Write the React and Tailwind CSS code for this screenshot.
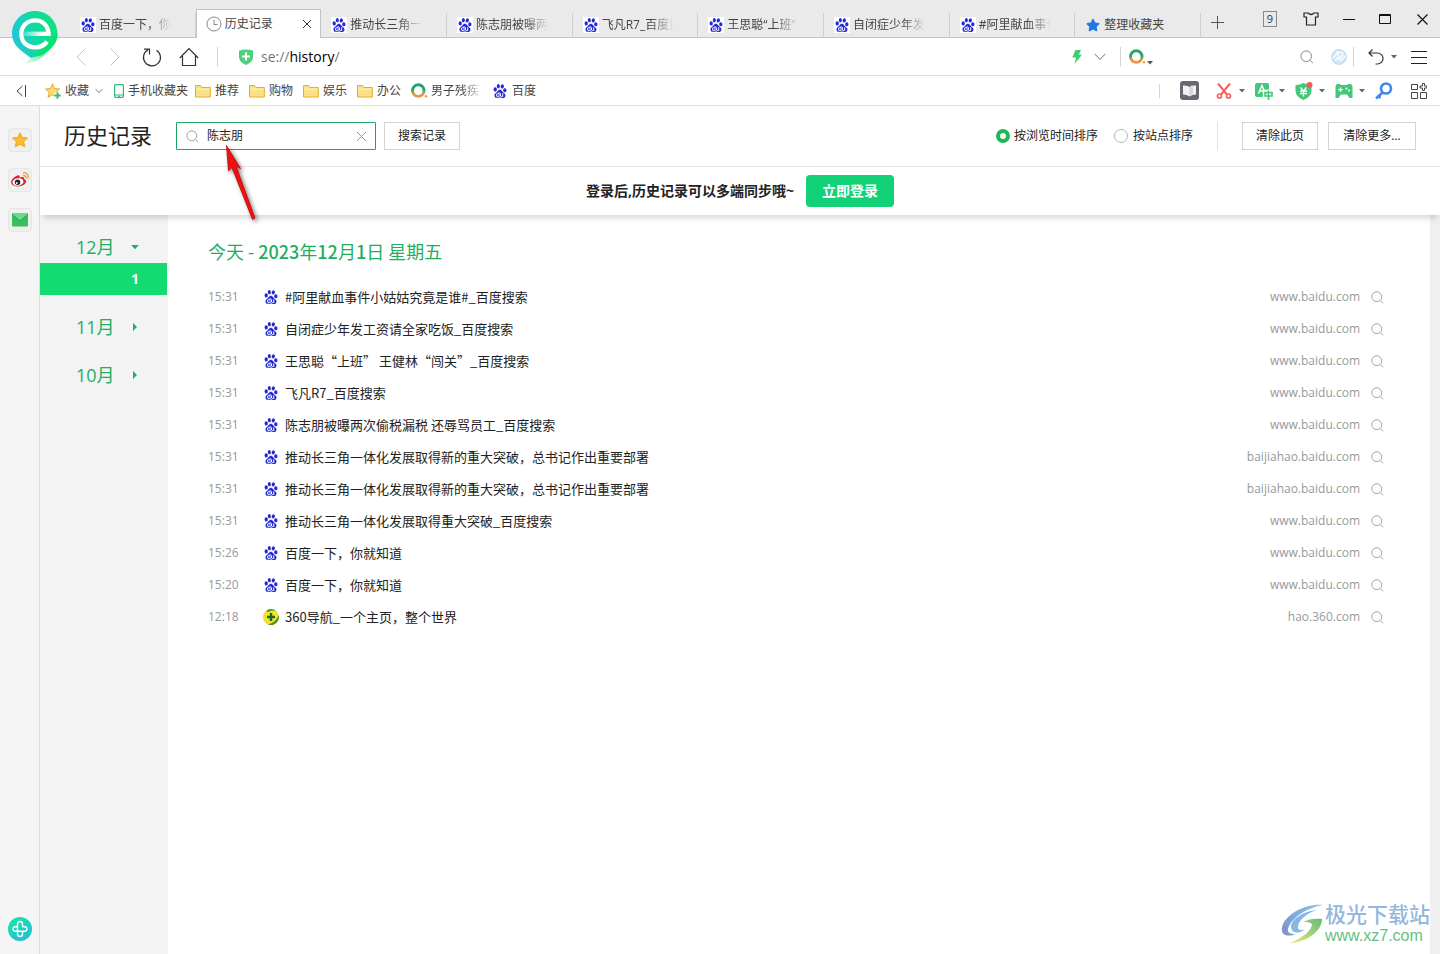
import React from "react";
import { SiBaidu } from "react-icons/si";
import { FaStar } from "react-icons/fa";

function Baidu() {
  return <SiBaidu aria-hidden="true" className="size-[14px] shrink-0 text-[#2529d8]" />;
}

function SearchIcon({ className }) {
  return (
    <svg viewBox="0 0 14 14" className={className} fill="none" stroke="currentColor" aria-hidden="true">
      <circle cx="6.2" cy="6.2" r="5.3" />
      <path d="M10.2 10.4 13 13.2" />
    </svg>
  );
}

function Caret({ className = "h-1 w-1.5" }) {
  return (
    <svg viewBox="0 0 6 4" className={"shrink-0 " + className} aria-hidden="true">
      <path d="M0 0H6L3 3.4Z" fill="currentColor" />
    </svg>
  );
}

function Chevron({ className }) {
  return (
    <svg viewBox="0 0 12 8" className={className} fill="none" stroke="currentColor" aria-hidden="true">
      <path d="M.8 1 6 6.4 11.2 1" />
    </svg>
  );
}

function Folder() {
  return (
    <svg viewBox="0 0 16 14" className="h-3.5 w-4 shrink-0" aria-hidden="true">
      <path d="M.5 13V1.5H5.5L7 3.5H15.3V13Z" fill="#fbe08a" stroke="#dfb02f" />
      <path d="M1 5.2H15" stroke="#fff1b8" />
    </svg>
  );
}

function RingLogo() {
  return (
    <svg viewBox="0 0 17 16" className="h-4 w-[17px] shrink-0" aria-hidden="true">
      <defs>
        <linearGradient id="ring" x1="0" y1="0" x2="0" y2="1">
          <stop offset=".45" stopColor="#21a66b" />
          <stop offset=".7" stopColor="#b8a44c" />
          <stop offset=".85" stopColor="#f7923c" />
        </linearGradient>
      </defs>
      <circle cx="7.3" cy="7.6" r="5.8" fill="none" stroke="url(#ring)" strokeWidth="2.9" />
      <circle cx="15" cy="13.2" r="1.2" fill="#f7923c" />
    </svg>
  );
}

function BrowserLogo() {
  return (
    <svg viewBox="0 0 46 54" className="h-[54px] w-[46px]" aria-hidden="true">
      <defs>
        <linearGradient id="pin" x1="0" y1=".7" x2="1" y2=".5">
          <stop offset="0" stopColor="#22c5dc" />
          <stop offset=".5" stopColor="#12d9a4" />
          <stop offset="1" stopColor="#0fe07e" />
        </linearGradient>
        <linearGradient id="tail" x1="1" y1="0" x2="0" y2="1">
          <stop offset=".3" stopColor="#07e368" />
          <stop offset="1" stopColor="#0fe070" stopOpacity="0" />
        </linearGradient>
        <linearGradient id="bar" gradientUnits="userSpaceOnUse" x1="12" y1="23" x2="30" y2="23">
          <stop offset="0" stopColor="#fff" stopOpacity=".2" />
          <stop offset="1" stopColor="#fff" />
        </linearGradient>
      </defs>
      <path d="M23 0C10.500 0 0 10 0 22.500C0 35 10 40 19 47L30 44L35 41C41 35.500 45.500 31 45.500 22.500C45.500 10 35.500 0 23 0Z" fill="url(#pin)" />
      <path d="M45.500 22.500C45.500 31 41 35.500 35 41C29 48.500 22 52 11 53L21 45.500L38 30Z" fill="url(#tail)" />
      <path d="M36.500 24.900C37 15 31 9.300 23.300 9.300C15 9.300 9.300 15.200 9.300 23C9.300 31 15 36.300 23 36.300C28 36.300 32.500 34.500 35 30.500" fill="none" stroke="#fff" strokeWidth="4.300" />
      <path d="M11.500 22.800H38.500" stroke="url(#bar)" strokeWidth="4.300" />
    </svg>
  );
}

const tabs = [
  { title: "百度一下，你就知道" },
  { title: "历史记录", kind: "clock", active: true },
  { title: "推动长三角一体化" },
  { title: "陈志朋被曝两次" },
  { title: "飞凡R7_百度搜索" },
  { title: "王思聪“上班” 王健林" },
  { title: "自闭症少年发工资" },
  { title: "#阿里献血事件" },
  { title: "整理收藏夹", kind: "star" },
];

function Tab({ title, kind, active }) {
  return (
    <div
      className={
        "relative flex min-w-0 items-center border-r pl-2.5 " +
        (active
          ? "-mb-px h-[29px] border-x border-t border-[#c4c4c4] bg-white pb-px pl-[9px]"
          : "h-6 border-[#cfcfcf]")
      }
    >
      <button type="button" className="flex min-w-0 items-center gap-[3px] text-left">
        {kind === "clock" ? (
          <svg viewBox="0 0 16 16" className="size-4 shrink-0" fill="none" stroke="#888" aria-hidden="true">
            <circle cx="8" cy="8" r="7" />
            <path d="M8 3.500V8.500H11.500" />
          </svg>
        ) : kind === "star" ? (
          <span className="flex size-4 shrink-0 items-center justify-center">
            <FaStar aria-hidden="true" className="size-3.5 text-[#2475e8]" />
          </span>
        ) : (
          <span className="flex size-4 shrink-0 items-center justify-center bg-white">
            <Baidu />
          </span>
        )}
        <span
          className={
            "w-[72px] overflow-hidden whitespace-nowrap text-xs text-[#444] " +
            (kind ? "" : "[mask-image:linear-gradient(to_right,black_48px,transparent_72px)]")
          }
        >
          {title}
        </span>
      </button>
      {active && (
        <button type="button" aria-label="关闭标签页" className="ml-auto mr-2">
          <svg viewBox="0 0 10 10" className="size-2.5" stroke="#333" aria-hidden="true">
            <path d="M1 1 9 9M9 1 1 9" />
          </svg>
        </button>
      )}
    </div>
  );
}

function TabStrip() {
  return (
    <div className="flex h-[38px] border-b border-[#c4c4c4] bg-[#eaeaea] pl-[70px]">
      <div className="grid w-[1131px] min-w-0 shrink grid-cols-9 items-end">
        {tabs.map((t) => (
          <Tab key={t.title} {...t} />
        ))}
      </div>
      <button type="button" aria-label="新建标签页" className="ml-2.5 mt-2 h-7">
        <svg viewBox="0 0 13 13" className="size-[13px]" stroke="#555" aria-hidden="true">
          <path d="M6.500 0V13M0 6.500H13" />
        </svg>
      </button>
      <div className="ml-auto flex h-[38px] items-center pr-3">
        <button type="button" className="mr-[26px] flex h-4 w-3.5 items-center justify-center border border-[#888] text-[11px] text-[#333]">
          9
        </button>
        <button type="button" aria-label="皮肤" className="mr-6">
          <svg viewBox="0 0 16 14" className="h-3.5 w-4" fill="none" stroke="#222" strokeWidth="1.200" aria-hidden="true">
            <path d="M5 1Q8 4 11 1H15L15 5H12.500V13H3.500V5H1V1Z" />
          </svg>
        </button>
        <button type="button" aria-label="最小化" className="mr-6">
          <svg viewBox="0 0 12 12" className="size-3" stroke="#111" aria-hidden="true">
            <path d="M0 6.500H12" />
          </svg>
        </button>
        <button type="button" aria-label="最大化" className="mr-[26px]">
          <svg viewBox="0 0 12 10" className="h-2.5 w-3" fill="none" stroke="#111" aria-hidden="true">
            <path d="M.5 .5H11.500V9.500H.5ZM.5 1.500H11.500" />
          </svg>
        </button>
        <button type="button" aria-label="关闭">
          <svg viewBox="0 0 11 11" className="size-[11px]" stroke="#111" strokeWidth="1.200" aria-hidden="true">
            <path d="M.5 .5 10.500 10.500M10.500 .5 .5 10.500" />
          </svg>
        </button>
      </div>
    </div>
  );
}

function AddressBar() {
  return (
    <div className="flex h-[38px] items-center border-b border-[#dedede] pl-[76px] pr-[13px]">
      <button type="button" aria-label="后退" className="mr-6">
        <svg viewBox="0 0 10 18" className="h-[18px] w-2.5" fill="none" stroke="#c4c4c4" aria-hidden="true">
          <path d="M9.500 .5 1 9 9.500 17.500" />
        </svg>
      </button>
      <button type="button" aria-label="前进" className="mr-[22px]">
        <svg viewBox="0 0 10 18" className="h-[18px] w-2.5" fill="none" stroke="#c4c4c4" aria-hidden="true">
          <path d="M.5 .5 9 9 .5 17.500" />
        </svg>
      </button>
      <button type="button" aria-label="刷新" className="mr-[17px]">
        <svg viewBox="0 0 20 20" className="size-5" fill="none" stroke="#333" strokeWidth="1.200" aria-hidden="true">
          <path d="M14.500 3.200A8.500 8.500 0 1 1 6 2.900M2 2.200H7.500V7.500" />
        </svg>
      </button>
      <button type="button" aria-label="主页" className="mr-[18px]">
        <svg viewBox="0 0 20 20" className="size-5" fill="none" stroke="#333" strokeWidth="1.200" aria-hidden="true">
          <path d="M.8 11 10 1.500 19.200 11M3.500 9V18.500H16.500V9" />
        </svg>
      </button>
      <span className="mr-[21px] h-5 w-px bg-[#d5d5d5]" />
      <svg viewBox="0 0 14 16" className="mr-2 h-4 w-3.5" aria-hidden="true">
        <path d="M0 1.500Q7-.5 14 1.500V8.500Q13.500 13 7 16Q.5 13 0 8.500Z" fill="#4fd07d" />
        <path d="M7 3.500V11.500M3 7.500H11" stroke="#fff" strokeWidth="2" />
      </svg>
      <span className="text-sm text-[#777]">
        se://<span className="text-black">history</span>/
      </span>
      <div className="ml-auto flex items-center">
        <svg viewBox="0 0 10 14" className="mr-3 h-3.5 w-2.5" aria-hidden="true">
          <path d="M3.500 0H9L6.800 4.800H10L2.500 14 4.200 7.500H.3Z" fill="#3fca74" />
        </svg>
        <button type="button" aria-label="展开地址列表" className="mr-3.5">
          <Chevron className="h-2 w-3 text-[#777]" />
        </button>
        <span className="mr-2 h-5 w-px bg-[#d5d5d5]" />
        <button type="button" aria-label="搜索引擎" className="flex items-end gap-px text-[#555]">
          <RingLogo />
          <Caret />
        </button>
        <button type="button" aria-label="搜索" className="ml-[147px] mr-[17px] text-[#888]">
          <SearchIcon className="size-3.5" />
        </button>
        <svg viewBox="0 0 16 16" className="mr-1.5 size-4" fill="none" aria-hidden="true">
          <circle cx="8" cy="8" r="7.300" fill="#d3e6fa" stroke="#b6d3f2" />
          <path d="M1.500 9.500 6.500 4.500 9.500 8.500 12 5.500M4.500 11.500 7 8.500 10 11.500 14.500 7M5 3.500Q9 1.500 12.500 5" stroke="#fff" strokeWidth="1.200" />
        </svg>
        <span className="mr-3.5 h-5 w-px bg-[#d5d5d5]" />
        <button type="button" aria-label="恢复标签页" className="mr-2 flex items-center gap-[7px] text-[#666]">
          <svg viewBox="0 0 16 16" className="size-4" fill="none" stroke="#333" strokeWidth="1.200" aria-hidden="true">
            <path d="M4.500 .5 1 4 4.500 7.500M1 4H9.500A5.500 5.500 0 0 1 9.500 15H7.500" />
          </svg>
          <Caret />
        </button>
        <button type="button" aria-label="菜单" className="ml-1.5">
          <svg viewBox="0 0 16 14" className="h-3.5 w-4" stroke="#222" aria-hidden="true">
            <path d="M0 1.500H16M0 7.500H16M0 13.500H16" />
          </svg>
        </button>
      </div>
    </div>
  );
}

function Tool({ label, children, caret = true }) {
  return (
    <button type="button" aria-label={label} className="flex w-10 shrink-0 items-center gap-1.5 text-[#666]">
      {children}
      {caret && <Caret />}
    </button>
  );
}

function BookmarksBar() {
  return (
    <div className="flex h-[30px] items-center border-b border-[#dedede] pl-4 pr-[13px] text-xs text-[#444]">
      <button type="button" aria-label="收起书签栏" className="mr-[19px]">
        <svg viewBox="0 0 10 12" className="h-3 w-2.5" fill="none" stroke="#444" aria-hidden="true">
          <path d="M6.500 1 1 6 6.500 11M9.500 0V12" />
        </svg>
      </button>
      <button type="button" className="flex items-center gap-1">
        <svg viewBox="0 0 16 16" className="size-4" aria-hidden="true">
          <path d="M7.500 .8 9.500 5.500 14.600 6 10.800 9.400 12 14.300 7.500 11.800 3 14.300 4.200 9.400.5 6 5.500 5.500Z" fill="#fbdc65" stroke="#e8a92c" />
          <path d="M12.500 9V16M9 12.500H16" stroke="#fff" strokeWidth="4" />
          <path d="M12.500 9.300V15.700M9.300 12.500H15.700" stroke="#42b877" strokeWidth="2" />
        </svg>
        收藏
        <Chevron className="ml-0.5 h-1.5 w-2" />
      </button>
      <a href="#phone" className="ml-[11px] flex items-center gap-1">
        <svg viewBox="0 0 10 14" className="h-3.5 w-2.5" fill="none" aria-hidden="true">
          <rect x=".6" y=".6" width="8.800" height="12.800" rx="1" stroke="#2fb67c" strokeWidth="1.200" />
          <path d="M1 11H9M4 12.300H6" stroke="#2fb67c" />
        </svg>
        手机收藏夹
      </a>
      <nav className="ml-[7px] flex gap-2.5">
        {["推荐", "购物", "娱乐", "办公"].map((name) => (
          <a key={name} href="#folder" className="flex items-center gap-1">
            <Folder />
            {name}
          </a>
        ))}
        <a href="#news" className="flex items-center gap-[3px]">
          <RingLogo />
          <span className="w-12 overflow-hidden whitespace-nowrap [mask-image:linear-gradient(to_right,black_30px,transparent_52px)]">男子残疾</span>
        </a>
        <a href="#baidu" className="ml-1 flex items-center gap-[5px]">
          <Baidu />
          百度
        </a>
      </nav>
      <div className="ml-auto flex items-center">
        <span className="mr-5 h-3.5 w-px bg-[#d5d5d5]" />
        <button type="button" aria-label="阅读模式" className="mr-4">
          <svg viewBox="0 0 19 19" className="size-[19px]" aria-hidden="true">
            <rect width="19" height="19" rx="3" fill="#686870" />
            <path d="M3 4.500Q7 4 9.500 6Q12 4 16 4.500V13.500Q12 13.500 9.500 15.500Q7 13.500 3 13.500Z" fill="#f3f3f5" />
            <path d="M9.500 6V15Q11.500 13.200 13 13V4.300Q11 4.500 9.500 6Z" fill="#d6d6da" />
          </svg>
        </button>
        <Tool label="截图">
          <svg viewBox="-1 0 18 16" className="h-4 w-[18px]" fill="none" stroke="#f4615e" strokeWidth="2" aria-hidden="true">
            <path d="M2 .5 11 11.500M14 .5 5 11.500" />
            <circle cx="3.500" cy="13" r="2" strokeWidth="1.700" />
            <circle cx="12.500" cy="13" r="2" strokeWidth="1.700" />
          </svg>
        </Tool>
        <Tool label="翻译">
          <svg viewBox="0 0 18 18" className="size-[18px]" fill="none" aria-hidden="true">
            <rect width="14" height="14" rx="2" fill="#42c878" y="1" />
            <path d="M3.500 11.500 7 3.500 10.500 11.500M4.800 9H9.200" stroke="#fff" strokeWidth="1.500" />
            <path d="M9.500 9.500H17.500V14.500H9.500ZM13.500 7.500V18" stroke="#fff" strokeWidth="3.500" />
            <path d="M10 10.500H17V14H10ZM13.500 8.500V18" stroke="#42c878" strokeWidth="1.600" />
          </svg>
        </Tool>
        <Tool label="网购保镖">
          <svg viewBox="0 0 18 18" className="size-[18px]" fill="none" aria-hidden="true">
            <path d="M.5 3.200Q5 3 8.500 1Q12 3 16.500 3.200V9Q16 15 8.500 18Q1 15 .5 9Z" fill="#42c878" />
            <path d="M5.500 5.500 8.500 9 11.500 5.500M5 9H12M5 11.500H12M8.500 9V14.500" stroke="#fff" strokeWidth="1.300" />
            <circle cx="14.500" cy="3" r="3" fill="#f35b5b" />
          </svg>
        </Tool>
        <Tool label="游戏">
          <svg viewBox="0 0 18 16" className="h-4 w-[18px]" fill="none" aria-hidden="true">
            <path d="M2 1H5L6 2H12L13 1H16L17.500 3V15H14.500L12 11.500H6L3.500 15H.5V3Z" fill="#42c878" />
            <path d="M5.500 4.500V9M3.200 6.700H7.800" stroke="#fff" strokeWidth="1.300" />
            <circle cx="11.500" cy="5.500" r="1" fill="#fff" />
            <circle cx="14" cy="7.500" r="1" fill="#fff" />
          </svg>
        </Tool>
        <Tool label="密码" caret={false}>
          <svg viewBox="0 0 18 18" className="size-[18px]" fill="none" stroke="#4287ed" aria-hidden="true">
            <circle cx="11" cy="6.500" r="5" strokeWidth="2.600" />
            <path d="M7.500 10.500 1 16.500M3.500 14 5.500 16" strokeWidth="2.500" />
          </svg>
        </Tool>
        <button type="button" aria-label="扩展" className="-ml-1">
          <svg viewBox="0 0 16 16" className="size-4" fill="none" stroke="#444" aria-hidden="true">
            <path d="M.5 1.500H6.500V6.500H.5ZM.5 9.500H6.500V15.500H.5ZM9.500 9.500H15.500V15.500H9.500Z" />
            <path d="M11.500 .5H13.500V3H16V5H13.500V7.500H11.500V5H9V3H11.500Z" />
          </svg>
        </button>
      </div>
    </div>
  );
}

function Sidebar() {
  const box = "flex size-6 items-center justify-center rounded border border-[#e6e6e6] bg-[#f0f0f0]";
  return (
    <aside className="flex w-10 shrink-0 flex-col items-center border-r border-[#dedede] bg-[#f5f5f5] pb-[13px] pt-[22px]">
      <div className="flex flex-col gap-4">
        <button type="button" aria-label="收藏" className={box}>
          <svg viewBox="0 0 16 16" className="size-4" aria-hidden="true">
            <path d="M8 .8 10.200 5.500 15.400 6 11.600 9.600 12.700 14.800 8 12.200 3.300 14.800 4.400 9.600.6 6 5.800 5.500Z" fill="#fcbd28" stroke="#eea22a" />
          </svg>
        </button>
        <button type="button" aria-label="微博" className={box}>
          <svg viewBox="0 0 20 18" className="h-[18px] w-5 shrink-0" fill="none" aria-hidden="true">
            <path d="M7.500 4.500C9 4 10 4.800 9.500 6.500C12 5.500 14.500 5.500 14 8C17 9 16.500 11.500 14.500 13.300C11.500 16 4.500 16.200 2 13.500C-.5 10.800 3 6 7.500 4.500Z" fill="#dc2430" />
            <ellipse cx="8" cy="11" rx="5.500" ry="3.700" transform="rotate(-8 8 11)" fill="#fff" />
            <circle cx="7.600" cy="11.200" r="2.700" fill="#222" />
            <circle cx="6.800" cy="12" r=".9" fill="#fff" />
            <path d="M13 2C16.500 1 19 4 18 7.500M13 4.600C15 4.200 16.300 5.500 15.700 7.400" stroke="#f0a441" strokeWidth="1.500" />
          </svg>
        </button>
        <button type="button" aria-label="邮件" className={box}>
          <svg viewBox="0 0 16 14" className="h-3.5 w-4" aria-hidden="true">
            <rect width="16" height="13.500" rx="1" fill="#39bf5f" />
            <path d="M0 1Q0 0 1 0H15Q16 0 16 1L8 8Z" fill="#6bd98a" />
            <path d="M0 1.500 8 8 16 1.500" fill="none" stroke="#279e49" />
          </svg>
        </button>
      </div>
      <button type="button" aria-label="添加" className="mt-auto">
        <svg viewBox="0 0 24 24" className="size-6" fill="none" aria-hidden="true">
          <defs>
            <linearGradient id="plus" x1=".2" y1="0" x2=".7" y2="1">
              <stop offset="0" stopColor="#17e5a8" />
              <stop offset="1" stopColor="#25bdd8" />
            </linearGradient>
          </defs>
          <circle cx="12" cy="12" r="12" fill="url(#plus)" />
          <path d="M14.500 9.800V7A2.500 2.500 0 0 0 9.500 7V17A2.500 2.500 0 0 0 14.500 17V14.300M9.500 9.800H6.800A2.300 2.300 0 0 0 6.800 14.300H17.200A2.300 2.300 0 0 0 17.200 9.800H14.500" stroke="#fff" strokeWidth="1.400" />
        </svg>
      </button>
    </aside>
  );
}

const outlined = "h-7 border border-[#d4d4d4] bg-white text-xs text-[#222]";
const radio =
  "size-3.5 appearance-none rounded-full border border-[#b5b5b5] bg-white checked:border-4 checked:border-[#1db954]";

function HistoryHeader() {
  return (
    <header className="flex h-[61px] items-center border-b border-[#e6e6e6] pl-6 pr-6 text-xs text-[#222]">
      <h1 className="mr-6 text-[22px]">历史记录</h1>
      <form className="flex gap-2" onSubmit={(e) => e.preventDefault()}>
        <div className="flex h-7 w-[200px] items-center rounded-[1px] border border-[#1fa565] pl-[9px] pr-2 text-[#999]">
          <SearchIcon className="size-[13px] shrink-0" />
          <label htmlFor="query" className="sr-only">搜索历史记录</label>
          <input id="query" type="text" defaultValue="陈志朋" className="ml-2 min-w-0 flex-1 bg-transparent text-[#222] outline-none" />
          <button type="button" aria-label="清空">
            <svg viewBox="0 0 11 11" className="size-[11px]" stroke="currentColor" aria-hidden="true">
              <path d="M1 1 10 10M10 1 1 10" />
            </svg>
          </button>
        </div>
        <button type="submit" className={outlined + " w-[76px]"}>搜索记录</button>
      </form>
      <div className="ml-auto flex items-center">
        <span className="mr-4 flex items-center gap-1">
          <input id="by-time" type="radio" name="sort" defaultChecked className={radio} />
          <label htmlFor="by-time">按浏览时间排序</label>
        </span>
        <span className="mr-6 flex items-center gap-[5px]">
          <input id="by-site" type="radio" name="sort" className={radio} />
          <label htmlFor="by-site">按站点排序</label>
        </span>
        <span className="mr-6 h-[30px] w-px bg-[#e2e2e2]" />
        <button type="button" className={outlined + " mr-2.5 w-[76px]"}>清除此页</button>
        <button type="button" className={outlined + " w-[88px]"}>清除更多...</button>
      </div>
    </header>
  );
}

function MonthList() {
  return (
    <nav className="flex w-32 shrink-0 flex-col bg-[#f3f3f3] pt-4 text-lg leading-8 text-[#1fae62]">
      <button type="button" className="flex h-8 items-center gap-4 pl-9">
        12月
        <Caret className="h-[5px] w-2" />
      </button>
      <button type="button" className="mr-px h-8 bg-[#12db72] pr-7 text-right text-sm font-bold text-white">1</button>
      {["11月", "10月"].map((m) => (
        <button key={m} type="button" className="mt-4 flex h-8 items-center gap-[18px] pl-9">
          {m}
          <svg viewBox="0 0 4 8" className="h-2 w-1" aria-hidden="true">
            <path d="M0 0 4 4 0 8Z" fill="currentColor" />
          </svg>
        </button>
      ))}
    </nav>
  );
}

const visits = [
  ["15:31", "#阿里献血事件小姑姑究竟是谁#_百度搜索", "www.baidu.com"],
  ["15:31", "自闭症少年发工资请全家吃饭_百度搜索", "www.baidu.com"],
  ["15:31", "王思聪“上班” 王健林“闯关”_百度搜索", "www.baidu.com"],
  ["15:31", "飞凡R7_百度搜索", "www.baidu.com"],
  ["15:31", "陈志朋被曝两次偷税漏税 还辱骂员工_百度搜索", "www.baidu.com"],
  ["15:31", "推动长三角一体化发展取得新的重大突破，总书记作出重要部署", "baijiahao.baidu.com"],
  ["15:31", "推动长三角一体化发展取得新的重大突破，总书记作出重要部署", "baijiahao.baidu.com"],
  ["15:31", "推动长三角一体化发展取得重大突破_百度搜索", "www.baidu.com"],
  ["15:26", "百度一下，你就知道", "www.baidu.com"],
  ["15:20", "百度一下，你就知道", "www.baidu.com"],
  ["12:18", "360导航_一个主页，整个世界", "hao.360.com"],
];

function Nav360() {
  return (
    <svg viewBox="0 0 16 16" className="size-4 shrink-0" fill="none" aria-hidden="true">
      <circle cx="8" cy="8" r="8" fill="#f7df2c" />
      <path d="M3 2Q8-2 13 2Q9 .8 5.500 3ZM15.800 6Q17 12 11 15.500Q8 16.500 5 15.500Q13 13.500 15.800 6Z" fill="#3d9a2b" />
      <path d="M8 4V12M4 8H12" stroke="#176b24" strokeWidth="2.400" />
    </svg>
  );
}

function VisitList() {
  return (
    <main className="min-w-0 flex-1 pl-10 pr-[46px] pt-5">
      <h2 className="mb-3.5 font-['Noto_Sans_CJK_SC',sans-serif] text-lg leading-8 text-[#1fae5e]">
        今天 - <b className="font-medium">2023</b>年<b className="font-medium">12</b>月<b className="font-medium">1</b>日 星期五
      </h2>
      <ul className="text-xs text-[#999]">
        {visits.map(([time, title, site], i) => (
          <li key={i} className="flex h-8 items-center">
            <time className="w-[55px] shrink-0">{time}</time>
            <a href="#visit" className="flex min-w-0 items-center gap-1.5 font-['Noto_Sans_CJK_SC',sans-serif] text-[13px] text-[#222]">
              <span className="flex w-4 shrink-0 justify-center">{site === "hao.360.com" ? <Nav360 /> : <Baidu />}</span>
              <span className="truncate">{title}</span>
            </a>
            <span className="ml-auto pl-4">{site}</span>
            <button type="button" aria-label="搜索此站点" className="ml-[11px]">
              <SearchIcon className="size-[13px]" />
            </button>
          </li>
        ))}
      </ul>
    </main>
  );
}

function Watermark() {
  return (
    <div className="absolute bottom-2 right-2.5 flex items-center">
      <svg viewBox="0 0 44 40" className="h-10 w-11" fill="none" aria-hidden="true">
        <defs>
          <linearGradient id="swirlBlue" x1="0" y1="1" x2="1" y2="0">
            <stop offset="0" stopColor="#7f8fca" />
            <stop offset="1" stopColor="#80c7ec" />
          </linearGradient>
          <linearGradient id="swirlGreen" x1="0" y1="1" x2="1" y2="0">
            <stop offset="0" stopColor="#e6e67a" />
            <stop offset="1" stopColor="#62bd7c" />
          </linearGradient>
        </defs>
        <path d="M42 1C26-1 3 10 1 24C-.5 32 8 33 15 30C8 31 5 28 8 22C13 12 26 4 42 1Z" fill="url(#swirlBlue)" />
        <path d="M36 6C24 7 11 14 10 22C9.500 29 18 31 24 25C20 27 16 26 17 22C18 16 26 9 36 6Z" fill="#84b7e1" />
        <path d="M22 18C28 15 34 14 41 15C41 27 26 38 9 39C22 34 31 26 31 20C28 18 25 18 22 18Z" fill="url(#swirlGreen)" />
      </svg>
      <div className="flex flex-col">
        <span className="text-[21px] font-medium leading-6 text-[#94b7e0]">极光下载站</span>
        <span className="font-['Liberation_Sans',sans-serif] text-base leading-5 text-[#66bf80]">www.xz7.com</span>
      </div>
    </div>
  );
}

export default function App() {
  return (
    <div className="relative flex min-h-screen flex-col bg-white font-['Open_Sans','Noto_Sans_CJK_SC',sans-serif]">
      <TabStrip />
      <AddressBar />
      <BookmarksBar />
      <a href="#home" aria-label="浏览器主页" className="absolute left-3 top-[11px]">
        <BrowserLogo />
      </a>
      <div className="flex flex-1">
        <Sidebar />
        <div className="flex min-w-0 flex-1 flex-col">
          <HistoryHeader />
          <div className="relative flex h-12 items-center justify-center gap-3 text-sm shadow-[0_6px_6px_-3px_rgba(0,0,0,0.16)]">
            <span className="font-bold text-[#222]">登录后,历史记录可以多端同步哦~</span>
            <button type="button" className="h-8 w-[88px] rounded-sm bg-[#12d176] font-bold text-white">立即登录</button>
          </div>
          <div className="flex flex-1">
            <MonthList />
            <VisitList />
            <div className="w-2.5 shrink-0 bg-[#efefef]" />
          </div>
        </div>
      </div>
      <svg viewBox="0 0 40 84" className="pointer-events-none absolute left-[222px] top-[142px] h-[84px] w-10 drop-shadow-[2px_2px_2px_rgba(0,0,0,0.5)]" aria-hidden="true">
        <path d="M4.500 3.500 18.500 26.500 14 24 33 76 30.500 77.500 10 25.500 6.500 29Z" fill="#f01010" stroke="#c00808" strokeWidth=".8" />
      </svg>
      <Watermark />
    </div>
  );
}
